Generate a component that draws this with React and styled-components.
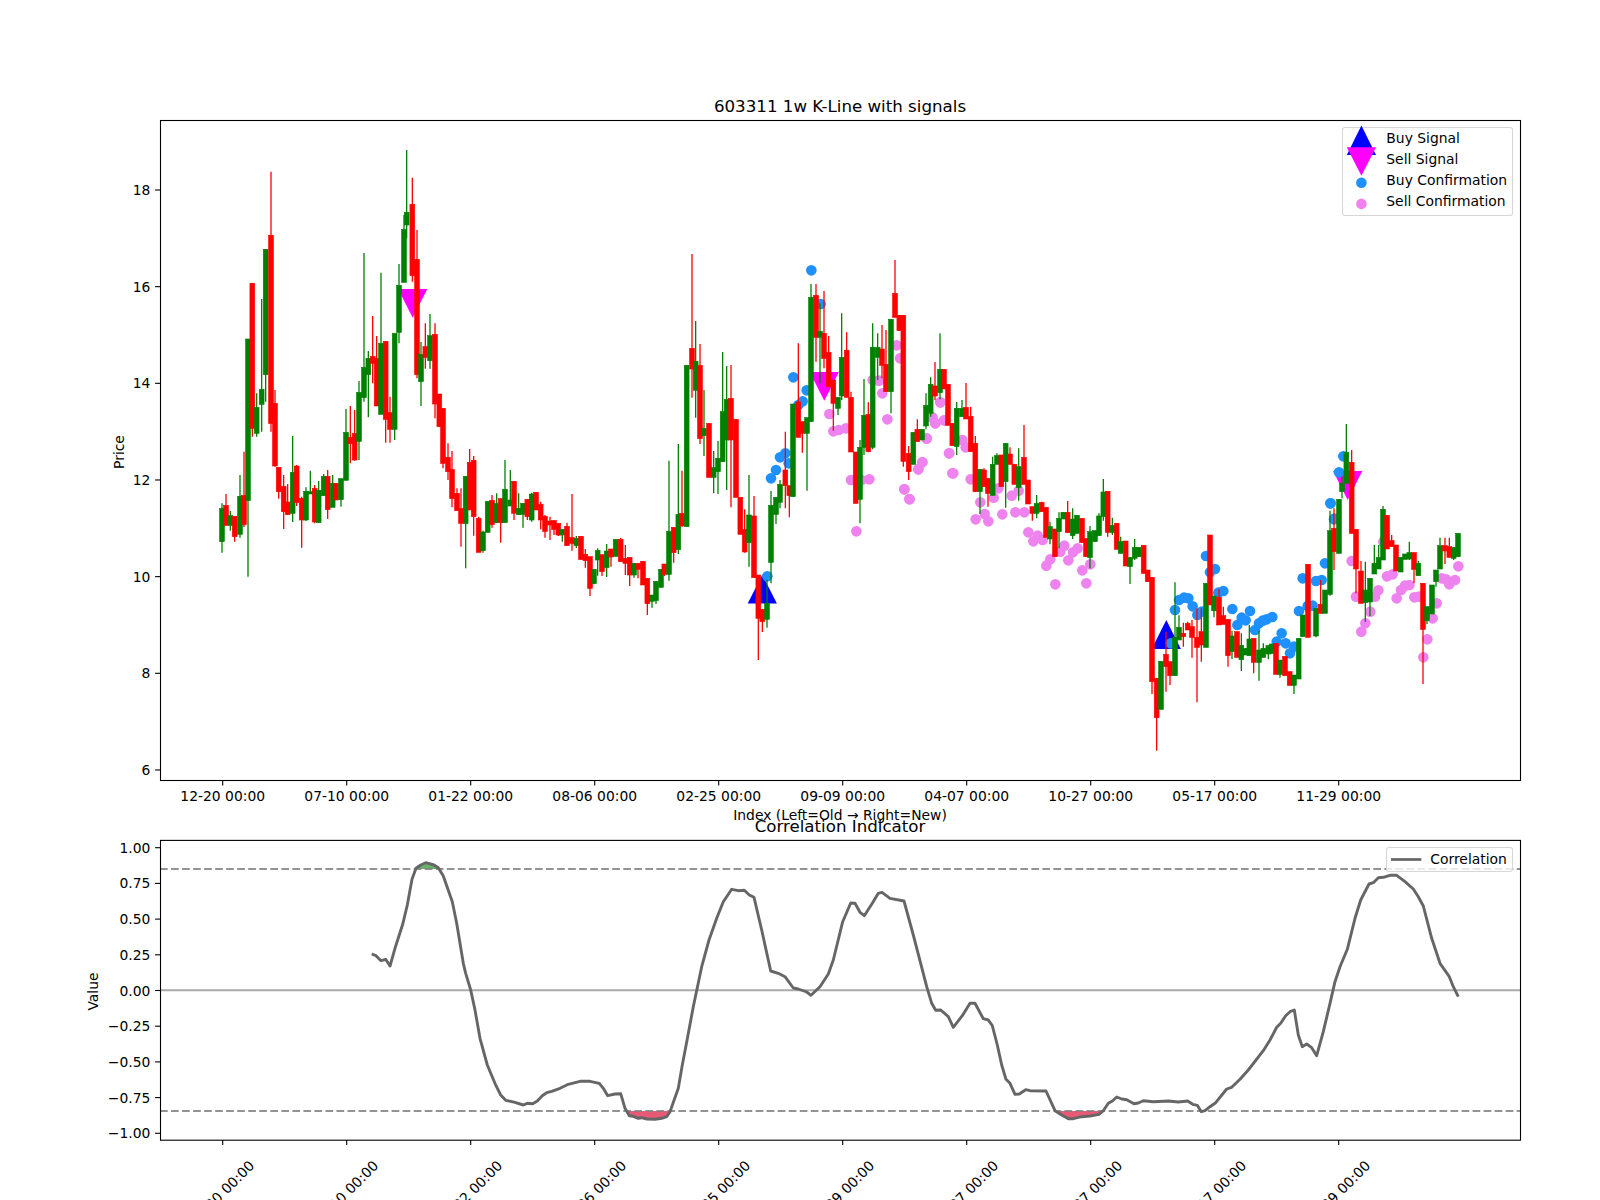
import React from 'react'
import styled, { createGlobalStyle } from 'styled-components'

const GlobalStyle = createGlobalStyle`
  html, body {
    margin: 0;
    background: #fff;
    overflow: hidden;
  }
`
const Figure = styled.div`
  width: 1600px;
  height: 1200px;
  padding-top: 95px;
  box-sizing: border-box;
  overflow: hidden;
  display: flex;
  flex-direction: column;
  background: #fff;
  color: #000;
  font-family: "DejaVu Sans", sans-serif;
`
const Title = styled.div`
  flex: none;
  width: 1360px;
  height: 25px;
  margin-left: 160px;
  font-size: 16.67px;
  line-height: 23px;
  text-align: center;
  position: relative;
  z-index: 1;
`
const Panel = styled.div`
  flex: none;
  position: relative;
  width: 1600px;
  height: ${props => props.$height}px;
`
const PlotSvg = styled.svg`
  display: block;
  width: 1600px;
  height: 100%;
  overflow: visible;
  font-family: "DejaVu Sans", sans-serif;
  font-size: 13.89px;
`
const Legend = styled.div`
  position: absolute;
  top: 7.3px;
  right: 86.7px;
  width: ${props => props.$width}px;
  height: ${props => props.$height}px;
  box-sizing: border-box;
  border: 1px solid rgba(204, 204, 204, 0.8);
  border-radius: 3px;
  background: rgba(255, 255, 255, 0.8);
`
const LegendRow = styled.div`
  display: flex;
  align-items: center;
  height: ${props => props.$height}px;
  line-height: ${props => props.$height}px;
  font-size: 13.89px;
  white-space: nowrap;
`
const LegendMark = styled.svg`
  flex: none;
  width: 43px;
  height: 100%;
  overflow: visible;
`

// candles are read off the chart: [x, bodyTop, bodyBottom, wickTop, wickBottom, colour]
const G = '#008000'
const R = '#ff0000'
const frame = (ox, oy, rows) => rows.map(([x, t, b, wt, wb, c]) => ({
  x: ox + x / 3,
  top: oy + t / 3,
  bot: oy + b / 3,
  wt: oy + wt / 3,
  wb: oy + wb / 3,
  c
}))

const CANDLES = [
  ...frame(200, 400, [
    [66, 325, 425, 310, 458, G], [78, 316, 376, 282, 376, R], [91, 347, 376, 333, 392, G], [104, 349, 410, 349, 425, R],
    [120, 289, 403, 225, 413, G], [132, 286, 374, 155, 381, R], [144, -183, 302, -183, 530, G], [157, -350, 85, -350, 110, R],
    [170, 22, 100, -20, 110, G], [185, -32, 13, -303, 95, G], [197, -452, -76, -452, 5, G], [213, -494, 70, -685, 95, R],
    [225, 10, 198, -30, 200, R], [236, 202, 275, 202, 296, R], [251, 259, 335, 225, 387, R], [263, 306, 344, 252, 344, R],
    [278, 217, 340, 108, 366, G], [290, 198, 308, 195, 318, R], [305, 295, 360, 290, 443, R], [318, 274, 360, 262, 363, G],
    [331, 275, 282, 212, 282, G], [344, 265, 366, 255, 370, R], [356, 271, 368, 243, 368, G], [371, 229, 287, 222, 287, G],
    [383, 229, 329, 210, 357, R], [398, 250, 322, 225, 322, G], [408, 250, 300, 250, 300, R], [423, 236, 299, 236, 320, G],
    [438, 97, 241, 27, 241, G], [451, 112, 131, 18, 190, R], [464, 100, 180, 30, 182, R], [477, -23, 124, -57, 180, G],
    [492, -98, -7, -441, 5, G], [505, -125, -76, -147, 52, G], [518, -131, -110, -252, -50, R], [530, -125, 18, -192, 18, R],
    [543, -170, 43, -382, 43, G], [557, -176, 58, -176, 128, R], [570, 38, 88, -10, 128, R], [584, -200, 88, -200, 120, G],
    [597, -344, -203, -408, -170, G], [612, -512, -353, -555, -353, G], [620, -563, -525, -750, -485, G], [637, -587, -373, -667, -355, R],
    [651, -422, -76, -510, -65, R], [663, -137, -55, -174, 18, G], [676, -160, -128, -230, -94, R], [690, -193, -118, -258, -94, G],
    [705, -197, 12, -230, 55, R], [718, -18, 80, -18, 80, R], [729, 25, 190, 25, 205, R], [744, 172, 215, 130, 240, R],
    [756, 208, 296, 153, 322, R], [771, 280, 332, 265, 332, R], [783, 325, 370, 265, 440, R], [797, 229, 371, 229, 505, G],
    [809, 187, 330, 147, 330, R], [821, 181, 350, 168, 407, R], [836, 355, 457, 350, 457, R], [849, 396, 452, 392, 458, G],
    [863, 304, 397, 304, 397, G], [876, 301, 374, 285, 383, R], [890, 310, 368, 280, 368, G], [902, 296, 368, 296, 428, R],
    [915, 268, 368, 180, 368, G], [931, 300, 318, 210, 318, G], [942, 244, 340, 244, 360, R], [956, 325, 344, 280, 345, G],
    [969, 310, 343, 310, 383, G], [982, 298, 350, 298, 360, R], [995, 282, 360, 278, 365, G], [1008, 277, 330, 277, 330, R],
    [1022, 313, 360, 305, 388, R], [1035, 349, 394, 345, 413, R], [1050, 363, 375, 350, 420, R], [1062, 362, 388, 360, 405, R],
    [1075, 370, 405, 370, 408, R], [1087, 388, 405, 388, 425, G], [1101, 379, 437, 368, 437, R], [1116, 413, 430, 282, 452, R],
    [1129, 415, 437, 408, 444, G], [1143, 409, 478, 409, 480, R], [1156, 463, 482, 447, 503, R], [1170, 470, 565, 470, 588, R],
    [1182, 508, 551, 508, 551, G], [1193, 451, 480, 445, 527, G]
  ]),
  ...frame(550, 480, [
    [156, 224, 275, 224, 288, R], [170, 213, 263, 192, 291, G], [183, 207, 231, 207, 260, R], [197, 178, 229, 178, 229, G],
    [212, 178, 245, 173, 245, R], [226, 235, 250, 195, 285, R], [239, 232, 285, 232, 318, R], [252, 250, 285, 250, 293, G],
    [264, 250, 268, 250, 295, R], [279, 244, 315, 244, 315, R], [292, 295, 371, 295, 405, R], [306, 345, 364, 345, 383, G],
    [318, 304, 362, 304, 372, G], [333, 268, 322, 268, 322, G], [343, 252, 283, 252, 288, R], [357, 154, 283, -58, 302, G],
    [371, 142, 218, 142, 248, R], [385, 103, 209, -108, 222, G], [396, 100, 138, -28, 140, R], [410, -344, 140, -344, 140, G],
    [426, -395, -333, -678, -247, R], [437, -356, -269, -477, -187, G], [450, -344, -124, -408, -108, R], [462, -155, -133, -270, -72, G],
    [477, -170, -8, -170, -8, R], [491, -37, -8, -87, 40, G], [504, -65, -25, -117, 42, G], [518, -205, -55, -384, -55, G],
    [530, -242, -120, -342, 30, G], [543, -245, -120, -345, 82, R], [558, -182, 52, -182, 52, R], [571, 52, 163, 52, 163, R],
    [584, 148, 216, 88, 218, R], [597, 105, 188, -15, 260, G], [612, 108, 293, 48, 293, R], [625, 285, 415, 285, 540, R],
    [637, 388, 425, 388, 456, R], [651, 370, 418, 300, 443, G], [663, 76, 247, 33, 310, G], [678, 52, 103, 52, 132, G],
    [690, 13, 67, 0, 85, G], [706, -30, 17, -145, 85, R], [718, 17, 47, 17, 112, R], [729, -228, 50, -228, 50, G],
    [745, -234, -128, -410, -128, R], [757, -175, -140, -175, -82, R], [771, -187, -140, -187, 32, G], [783, -548, -175, -588, -175, G],
    [798, -554, -428, -588, -355, R], [810, -446, -428, -530, -290, G], [822, -440, -365, -567, -335, R], [836, -383, -280, -432, -280, R],
    [850, -300, -230, -300, -148, R], [864, -248, -215, -248, -195, G], [875, -368, -252, -500, -240, G], [890, -389, -248, -443, -248, R],
    [903, -248, -84, -265, -84, R], [917, -84, 70, -84, 70, R], [930, -98, 58, -120, 130, G], [942, -194, -98, -303, -75, G],
    [955, -197, -85, -233, -83, R], [968, -398, -98, -470, -92, G], [983, -398, -368, -440, -300, G], [996, -393, -344, -465, -305, R],
    [1008, -347, -265, -450, -265, R], [1023, -482, -265, -482, -200, G], [1035, -560, -488, -660, -488, R], [1048, -494, -448, -494, -448, R],
    [1060, -494, -56, -494, -40, R], [1076, -80, -25, -102, 0, R], [1090, -143, -47, -143, -47, G], [1102, -152, -115, -182, -115, R],
    [1116, -152, -120, -152, -120, G], [1128, -224, -162, -260, -152, G], [1142, -287, -200, -308, -190, G], [1155, -282, -252, -354, -240, R],
    [1170, -332, -262, -440, -242, G], [1182, -332, -273, -332, -273, R], [1194, -287, -164, -287, -164, R]
  ]),
  ...frame(900, 340, [
    [157, 250, 317, 250, 317, R], [170, 205, 320, 186, 345, G], [186, 205, 230, 180, 230, G], [198, 202, 237, 129, 237, R],
    [212, 229, 335, 200, 335, R], [226, 310, 455, 288, 455, R], [240, 388, 455, 388, 522, G], [252, 390, 440, 385, 440, R],
    [264, 415, 460, 415, 500, R], [278, 373, 466, 350, 466, G], [291, 347, 373, 340, 373, G], [304, 345, 440, 345, 440, R],
    [317, 310, 425, 310, 503, G], [330, 342, 373, 322, 373, R], [343, 373, 433, 373, 433, R], [356, 380, 443, 325, 482, G],
    [372, 352, 433, 255, 433, R], [384, 420, 492, 420, 492, R], [397, 500, 520, 500, 542, R], [410, 490, 520, 465, 535, G],
    [425, 487, 515, 485, 515, R], [438, 502, 592, 502, 592, R], [450, 560, 597, 545, 613, G], [465, 567, 650, 567, 650, R],
    [477, 535, 575, 517, 625, G], [490, 517, 537, 517, 537, G], [503, 517, 578, 483, 578, R], [518, 537, 587, 505, 597, G],
    [531, 526, 580, 526, 580, G], [546, 535, 608, 535, 608, R], [558, 595, 650, 595, 650, R], [570, 575, 653, 558, 685, G],
    [585, 572, 605, 572, 605, G], [597, 528, 587, 520, 587, G], [610, 456, 530, 417, 542, G], [623, 454, 577, 454, 590, R],
    [637, 556, 577, 533, 585, G], [650, 550, 628, 550, 628, R], [662, 604, 640, 590, 640, G], [677, 603, 678, 603, 678, R],
    [690, 652, 680, 652, 732, G], [704, 622, 655, 597, 660, G], [716, 622, 650, 622, 650, G], [731, 616, 700, 616, 700, R],
    [743, 690, 725, 690, 725, R]
  ]),
  ...frame(1080, 500, [
    [216, 232, 545, 232, 582, R], [230, 535, 653, 535, 752, R], [243, 484, 628, 484, 628, G], [258, 463, 500, 395, 575, R],
    [270, 485, 527, 485, 555, R], [285, 412, 527, 247, 527, G], [297, 382, 420, 346, 420, G], [310, 400, 410, 368, 440, R],
    [323, 370, 390, 365, 390, R], [336, 380, 412, 360, 473, R], [351, 412, 442, 325, 607, R], [364, 395, 435, 325, 485, R],
    [378, 250, 442, 250, 442, G], [390, 105, 315, 105, 315, R], [402, 288, 332, 288, 352, G], [417, 292, 375, 268, 375, R],
    [430, 347, 373, 320, 373, R], [444, 358, 467, 358, 500, R], [456, 408, 455, 392, 477, G], [471, 395, 472, 395, 472, R],
    [484, 436, 479, 400, 513, G], [497, 445, 465, 445, 465, G], [508, 417, 467, 375, 467, G], [521, 415, 487, 415, 520, R],
    [537, 450, 487, 392, 542, G], [550, 445, 472, 430, 472, G], [565, 437, 462, 437, 478, G], [575, 432, 460, 432, 460, G],
    [588, 430, 523, 430, 523, R], [600, 480, 523, 480, 533, G], [615, 469, 527, 469, 527, R], [629, 515, 556, 515, 556, R],
    [642, 525, 556, 525, 582, G], [656, 415, 537, 415, 537, G], [668, 345, 410, 345, 410, G], [684, 193, 412, 193, 412, R],
    [708, 325, 408, 325, 412, G], [722, 313, 340, 240, 340, R], [735, 270, 340, 270, 340, G], [750, 92, 283, 32, 287, G],
    [762, 85, 155, 25, 210, R], [777, -2, 160, -2, 160, G], [786, -50, -25, -70, -5, G], [799, -143, -50, -228, -50, G],
    [815, -113, 100, -150, 100, R], [828, 88, 207, 88, 280, R], [843, 213, 310, 183, 310, R], [856, 270, 308, 185, 365, G],
    [870, 235, 306, 235, 348, G], [883, 190, 222, 135, 222, G], [896, 173, 207, 135, 207, G], [909, 28, 180, 18, 180, G],
    [921, 46, 147, 46, 147, R], [935, 122, 140, 105, 140, R], [948, 135, 213, 135, 213, R], [962, 172, 216, 172, 216, G],
    [975, 162, 178, 162, 178, G], [988, 158, 177, 125, 180, G], [1002, 158, 208, 158, 250, R], [1015, 190, 227, 183, 227, G],
    [1029, 250, 388, 250, 552, R], [1041, 320, 362, 320, 372, G], [1056, 255, 342, 255, 342, G], [1068, 210, 245, 210, 260, G],
    [1080, 137, 207, 113, 207, G], [1095, 137, 153, 113, 192, R], [1108, 140, 172, 113, 172, R], [1121, 142, 175, 142, 180, G],
    [1134, 100, 170, 100, 170, G]
  ])
]

const pts = (ox, oy, rows) => rows.map(([x, y]) => [ox + x / 3, oy + y / 3])

const BUY_DOTS = [
  ...pts(550, 240, [[784, 91], [812, 192], [730, 412], [770, 451], [758, 484], [745, 495], [663, 715], [678, 690], [690, 652], [706, 640], [716, 670]]),
  ...pts(550, 480, [[652, 289]]),
  ...pts(1080, 500, [
    [378, 168], [390, 217], [405, 207], [285, 330], [297, 300], [312, 293], [325, 295], [338, 319], [352, 345], [365, 335],
    [415, 278], [430, 273], [457, 327], [510, 333], [472, 375], [485, 353], [497, 361], [525, 390], [537, 370], [548, 362],
    [560, 358], [577, 351], [605, 400], [590, 425], [617, 430], [630, 460], [642, 440], [657, 333], [683, 318], [698, 317],
    [668, 235], [708, 243], [725, 240], [735, 190], [752, 10], [762, 58], [272, 430]
  ]),
  ...pts(1290, 410, [[121, 280], [133, 326], [147, 187], [160, 139]])
]

const SELL_DOTS = [
  ...pts(550, 240, [
    [838, 522], [850, 574], [866, 570], [888, 565], [903, 720], [958, 718], [935, 720], [919, 874], [1063, 748], [1078, 777],
    [1105, 688], [1117, 667], [1012, 538], [997, 460], [968, 420], [987, 422], [1040, 316], [1050, 355], [1130, 596], [1147, 533],
    [1156, 550], [1183, 541], [1171, 487], [1197, 640], [1207, 700]
  ]),
  ...pts(900, 340, [
    [13, 448], [29, 478], [55, 388], [67, 367], [80, 295], [97, 232], [106, 250], [133, 241], [121, 187], [148, 340],
    [160, 400], [187, 300], [197, 322], [212, 418], [241, 487], [227, 538], [254, 522], [265, 544], [307, 523], [281, 473],
    [295, 445], [335, 467], [346, 517], [373, 517], [356, 452], [385, 577], [400, 604], [413, 587], [428, 600], [439, 677],
    [451, 658], [466, 733], [481, 635], [493, 617], [505, 661], [519, 637], [533, 625], [547, 691], [559, 730], [571, 673]
  ]),
  ...pts(1080, 500, [
    [815, 183], [828, 290], [844, 395], [856, 370], [871, 335], [885, 290], [895, 271], [921, 229], [938, 223], [950, 295],
    [963, 270], [975, 257], [988, 255], [1003, 292], [1017, 290], [1030, 472], [1042, 418], [1058, 355], [1070, 310], [1085, 235],
    [1098, 238], [1108, 253], [1125, 240], [1135, 199], [910, 125]
  ])
]

const CORRELATION = [
  ...pts(80, 790, [
    [875, 492], [888, 497], [903, 512], [917, 508], [930, 528], [945, 475], [968, 403], [982, 345], [996, 268], [1008, 235],
    [1022, 225], [1037, 218], [1062, 225], [1075, 233], [1090, 258], [1117, 335], [1130, 400], [1150, 520], [1157, 550], [1172, 600],
    [1185, 660], [1200, 745], [1222, 825], [1248, 887], [1262, 915], [1277, 931], [1305, 937], [1330, 945], [1342, 940], [1358, 941],
    [1372, 933], [1387, 917], [1400, 908], [1415, 904], [1440, 895]
  ]),
  ...pts(560, 790, [
    [22, 884], [60, 874], [90, 874], [118, 880], [130, 895], [143, 917], [165, 912], [182, 911], [195, 955], [208, 977],
    [220, 979], [235, 985], [245, 983], [260, 987], [285, 988], [305, 985], [320, 980], [330, 965], [355, 895], [367, 825],
    [383, 740], [400, 650], [425, 530], [447, 450], [470, 385], [490, 335], [515, 298], [535, 302], [553, 301], [568, 315],
    [582, 322], [605, 420], [632, 543], [655, 550], [675, 560], [700, 594], [715, 597], [740, 606], [753, 616], [780, 590],
    [805, 552], [820, 510], [848, 395], [872, 339], [885, 340], [900, 367], [913, 377], [937, 340], [955, 310], [966, 307],
    [990, 325], [1032, 333], [1060, 435], [1100, 590], [1115, 640], [1127, 661], [1142, 660], [1165, 680], [1180, 712], [1207, 677],
    [1230, 640], [1245, 640], [1270, 686], [1285, 690], [1297, 707], [1312, 765], [1325, 825], [1338, 868], [1350, 880], [1365, 913],
    [1378, 912], [1397, 899], [1410, 902]
  ]),
  ...pts(1040, 790, [
    [18, 903], [45, 962], [65, 975], [85, 986], [100, 986], [125, 980], [150, 978], [177, 973], [190, 962], [205, 940],
    [218, 932], [230, 921], [245, 927], [260, 929], [282, 941], [295, 939], [310, 932], [340, 935], [385, 933], [415, 936],
    [443, 933], [458, 943], [472, 946], [484, 965], [495, 962], [510, 950], [527, 938], [560, 897], [575, 892], [600, 868],
    [625, 840], [670, 782], [690, 750], [710, 712], [722, 700], [737, 677], [750, 665], [763, 660], [775, 735], [787, 770],
    [800, 762], [815, 773], [830, 797], [850, 725], [870, 640], [885, 575], [900, 530], [922, 478], [945, 385], [962, 330],
    [987, 282], [1000, 278], [1015, 263], [1030, 262], [1050, 256], [1070, 256], [1095, 275], [1120, 297], [1135, 320], [1150, 348],
    [1175, 445], [1200, 520], [1228, 560], [1240, 590], [1255, 620]
  ])
]

const X_LABELS = ['12-20 00:00', '07-10 00:00', '01-22 00:00', '08-06 00:00', '02-25 00:00', '09-09 00:00', '04-07 00:00', '10-27 00:00', '05-17 00:00', '11-29 00:00']
const tickX = i => 222.7 + 124 * i
const PRICE_TICKS = [6, 8, 10, 12, 14, 16, 18]
const priceY = p => 190 + (18 - p) * 48.33
const VALUE_TICKS = ['1.00', '0.75', '0.50', '0.25', '0.00', '\u22120.25', '\u22120.50', '\u22120.75', '\u22121.00']
const valueY = i => 847.7 + i * 35.7

const toPath = points => points.map(([x, y], i) => `${i ? 'L' : 'M'}${x.toFixed(1)} ${y.toFixed(1)}`).join(' ')
const firstX = CORRELATION[0][0]
const lastX = CORRELATION[CORRELATION.length - 1][0]
const areaTo = y => `M${firstX} ${y} ${toPath(CORRELATION).replace('M', 'L')} L${lastX} ${y} Z`

const tri = (x, y, dir) => `${x},${y - 14.4 * dir} ${x - 14.6},${y + 14.4 * dir} ${x + 14.6},${y + 14.4 * dir}`

function XTicks ({ bottom }) {
  return X_LABELS.map((_, i) => (
    <line key={i} x1={tickX(i)} x2={tickX(i)} y1={bottom} y2={bottom + 4.9} stroke='#000' strokeWidth='1.1' />
  ))
}

function PriceChart () {
  return (
    <PlotSvg viewBox='0 120 1600 695'>
      <defs>
        <clipPath id='price-area'><rect x='160' y='120' width='1360' height='660' /></clipPath>
      </defs>
      <g clipPath='url(#price-area)'>
        <polygon points={tri(762.3, 589.2, 1)} fill='#0000ff' />
        <polygon points={tri(1166.3, 634.5, 1)} fill='#0000ff' />
        <polygon points={tri(412.7, 303.4, -1)} fill='#ff00ff' />
        <polygon points={tri(824.3, 386.3, -1)} fill='#ff00ff' />
        <polygon points={tri(1347.7, 485.5, -1)} fill='#ff00ff' />
        {BUY_DOTS.map(([x, y], i) => <circle key={i} cx={x} cy={y} r='5.3' fill='#1e90ff' />)}
        {SELL_DOTS.map(([x, y], i) => <circle key={i} cx={x} cy={y} r='5.3' fill='#ee82ee' />)}
        {CANDLES.map((k, i) => (
          <g key={i} fill={k.c} stroke={k.c}>
            <line x1={k.x} x2={k.x} y1={k.wt} y2={k.wb} strokeWidth='1.3' />
            <rect x={k.x - 2.4} y={k.top} width='4.8' height={Math.max(k.bot - k.top, 0.5)} strokeWidth='0.6' />
          </g>
        ))}
      </g>
      <rect x='160.5' y='120.5' width='1360' height='660' fill='none' stroke='#000' strokeWidth='1.1' />
      <XTicks bottom={780.5} />
      {X_LABELS.map((label, i) => (
        <text key={label} x={tickX(i)} y='801' textAnchor='middle'>{label}</text>
      ))}
      {PRICE_TICKS.map(p => (
        <g key={p}>
          <line x1='155.1' x2='160' y1={priceY(p)} y2={priceY(p)} stroke='#000' strokeWidth='1.1' />
          <text x='150.3' y={priceY(p) + 5} textAnchor='end'>{p}</text>
        </g>
      ))}
      <text x='840' y='819.6' textAnchor='middle'>Index (Left=Old → Right=New)</text>
      <text transform='rotate(-90 124 452)' x='124' y='452' textAnchor='middle'>Price</text>
    </PlotSvg>
  )
}

function CorrelationChart () {
  return (
    <PlotSvg viewBox='0 840 1600 360'>
      <defs>
        <clipPath id='corr-area'><rect x='160' y='840' width='1360' height='300' /></clipPath>
        <clipPath id='corr-high'><rect x='160' y='840' width='1360' height='29' /></clipPath>
        <clipPath id='corr-low'><rect x='160' y='1111' width='1360' height='29' /></clipPath>
      </defs>
      <g clipPath='url(#corr-area)'>
        <path d={areaTo(869)} fill='#008000' fillOpacity='0.6' clipPath='url(#corr-high)' />
        <path d={areaTo(1111)} fill='#dc143c' fillOpacity='0.7' clipPath='url(#corr-low)' />
        <line x1='160' x2='1520' y1='869' y2='869' stroke='#808080' strokeOpacity='0.85' strokeWidth='2.1' strokeDasharray='7.7 3.33' />
        <line x1='160' x2='1520' y1='1111' y2='1111' stroke='#808080' strokeOpacity='0.85' strokeWidth='2.1' strokeDasharray='7.7 3.33' />
        <line x1='160' x2='1520' y1='990.2' y2='990.2' stroke='#aaaaaa' strokeWidth='2.1' />
        <path d={toPath(CORRELATION)} fill='none' stroke='#666666' strokeWidth='2.9' strokeLinejoin='round' />
      </g>
      <rect x='160.5' y='840.4' width='1360' height='299.8' fill='none' stroke='#000' strokeWidth='1.1' />
      <XTicks bottom={1140} />
      {X_LABELS.map((label, i) => (
        <text key={label} transform={`rotate(-45 ${tickX(i) - 1} 1193)`} x={tickX(i) - 1} y='1198' textAnchor='middle'>{label}</text>
      ))}
      {VALUE_TICKS.map((v, i) => (
        <g key={v}>
          <line x1='155.1' x2='160' y1={valueY(i)} y2={valueY(i)} stroke='#000' strokeWidth='1.1' />
          <text x='150.3' y={valueY(i) + 5} textAnchor='end'>{v}</text>
        </g>
      ))}
      <text transform='rotate(-90 98 991.5)' x='98' y='991.5' textAnchor='middle'>Value</text>
    </PlotSvg>
  )
}

export default function App () {
  return (
    <>
      <GlobalStyle />
      <Figure>
        <Title>603311 1w K-Line with signals</Title>
        <Panel $height={695}>
          <PriceChart />
          <Legend $width={171} $height={88.4}>
            <LegendRow $height={20.75}>
              <LegendMark viewBox='-18.4 -10.375 43 20.75'><polygon points='0,-12.8 -14.6,16.5 14.6,16.5' fill='#0000ff' /></LegendMark>
              Buy Signal
            </LegendRow>
            <LegendRow $height={20.75}>
              <LegendMark viewBox='-18.4 -10.375 43 20.75'><polygon points='0,16.45 -14.6,-12.25 14.6,-12.25' fill='#ff00ff' /></LegendMark>
              Sell Signal
            </LegendRow>
            <LegendRow $height={20.75}>
              <LegendMark viewBox='-18.4 -10.375 43 20.75'><circle cx='0' cy='2.3' r='5.3' fill='#1e90ff' /></LegendMark>
              Buy Confirmation
            </LegendRow>
            <LegendRow $height={20.75}>
              <LegendMark viewBox='-18.4 -10.375 43 20.75'><circle cx='0' cy='2.5' r='5.3' fill='#ee82ee' /></LegendMark>
              Sell Confirmation
            </LegendRow>
          </Legend>
        </Panel>
        <Title>Correlation Indicator</Title>
        <Panel $height={360}>
          <CorrelationChart />
          <Legend $width={127} $height={25}>
            <LegendRow $height={23}>
              <LegendMark viewBox='0 -11.5 43 23'><line x1='4' x2='34.4' y1='0' y2='0' stroke='#666666' strokeWidth='2.7' /></LegendMark>
              Correlation
            </LegendRow>
          </Legend>
        </Panel>
      </Figure>
    </>
  )
}
